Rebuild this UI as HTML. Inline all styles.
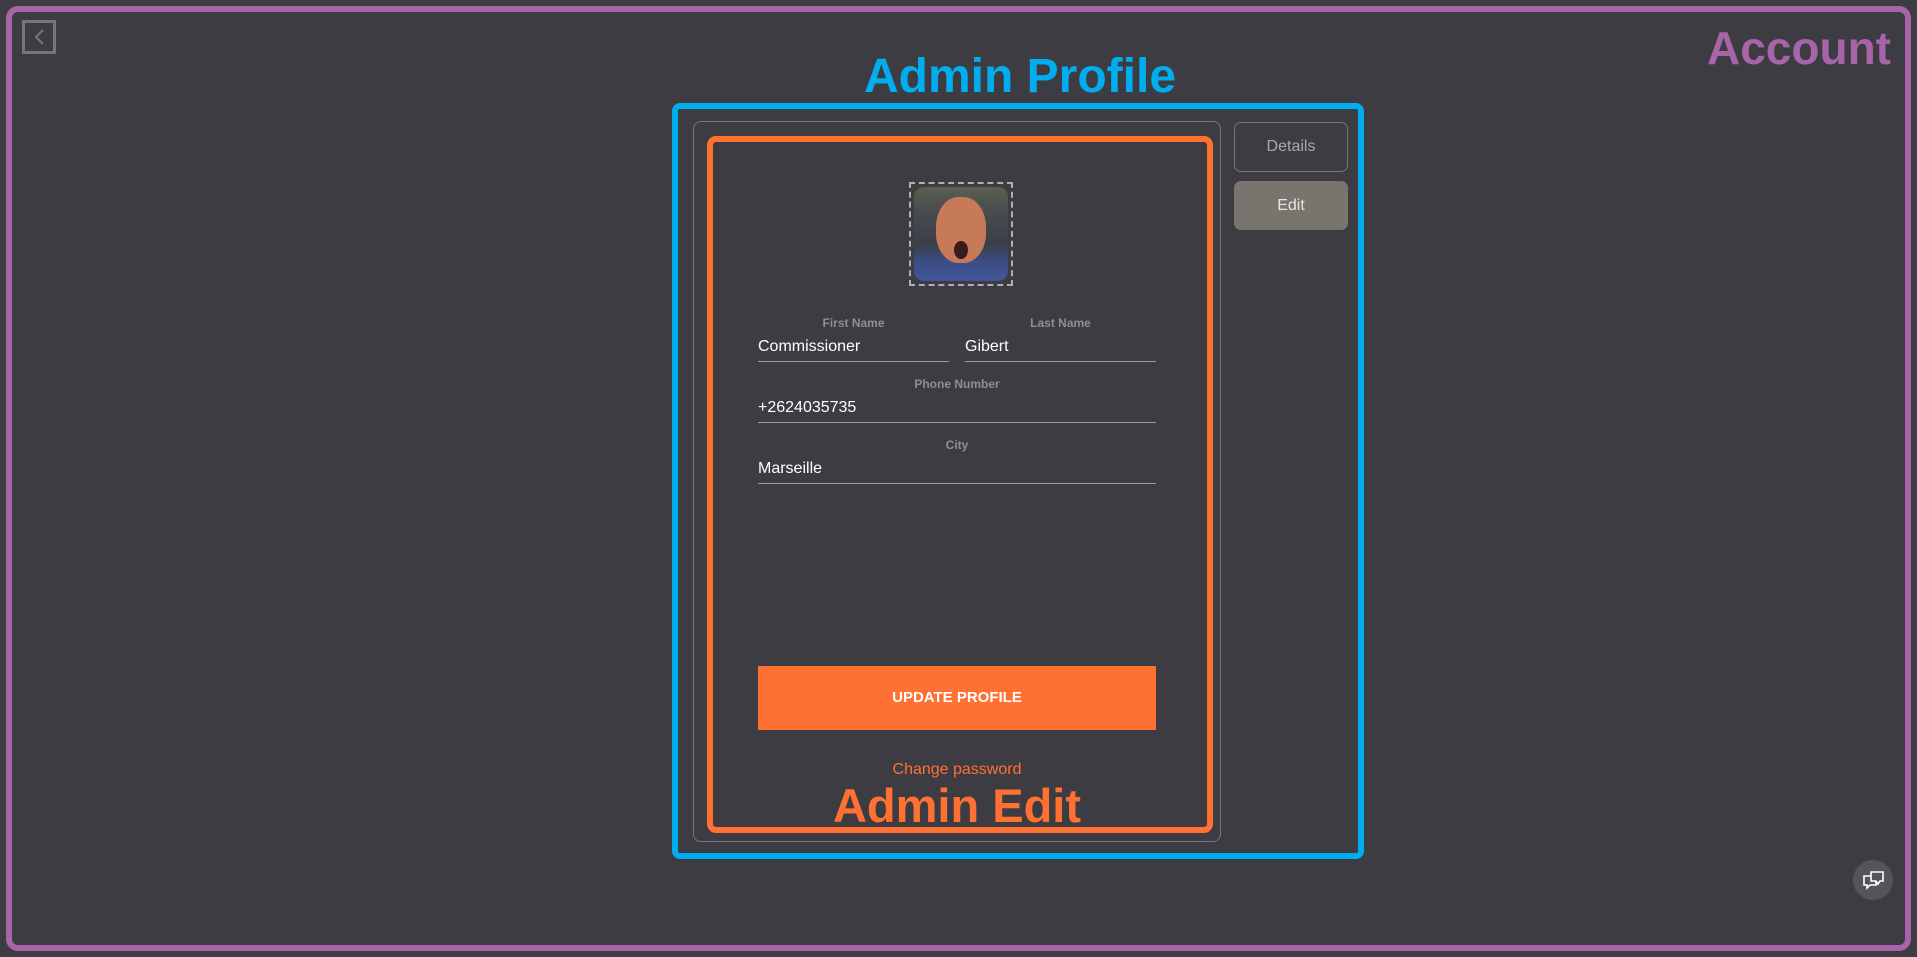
<!DOCTYPE html>
<html><head><meta charset="utf-8"><style>
*{box-sizing:border-box;margin:0;padding:0}
body{width:1917px;height:957px;background:#3d3c42;font-family:"Liberation Sans",sans-serif;position:relative;overflow:hidden}
.a{position:absolute}
.lbl{position:absolute;font-size:12px;font-weight:bold;color:#8f8e94;text-align:center}
.inp{position:absolute;border-bottom:1px solid #9a999f;color:#fff;font-size:16px;padding-bottom:4px;height:24px}
</style></head><body>
<div class="a" style="left:6px;top:6px;width:1905px;height:945px;border:6px solid #a864a8;border-radius:12px"></div>
<div class="a" style="left:22px;top:20px;width:34px;height:34px;border:3px solid #7a7570"></div>
<svg class="a" style="left:22px;top:20px" width="34" height="34"><path d="M21 10 L14 17 L21 24" stroke="#7a7570" stroke-width="2" fill="none"/></svg>
<div class="a" style="right:26px;top:18px;font-size:46px;font-weight:bold;color:#a864a8;line-height:60px">Account</div>
<div class="a" style="left:820px;width:400px;top:47px;text-align:center;font-size:48px;font-weight:bold;color:#00aeef;line-height:60px">Admin Profile</div>
<div class="a" style="left:672px;top:103px;width:692px;height:756px;border:6px solid #00aeef;border-radius:8px"></div>
<div class="a" style="left:693px;top:121px;width:528px;height:721px;border:1px solid #77767a;border-radius:8px"></div>
<div class="a" style="left:707px;top:136px;width:506px;height:697px;border:6px solid #ff7033;border-radius:9px"></div>
<div class="a" style="left:1234px;top:122px;width:114px;height:50px;border:1px solid #77767a;border-radius:7px;color:#a9a8ad;font-size:16px;text-align:center;line-height:48px">Details</div>
<div class="a" style="left:1234px;top:181px;width:114px;height:49px;background:#7a746e;border-radius:7px;color:#e8e6e3;font-size:16px;text-align:center;line-height:49px">Edit</div>
<div class="a" style="left:909px;top:182px;width:104px;height:104px;border:2px dashed #b0afb5;padding:3px">
<div style="width:100%;height:100%;border-radius:10px;background:linear-gradient(180deg,#5a6050 0%,#4a4d4e 25%,#3a3e48 60%,#3b4e86 80%,#41569a 100%);position:relative;overflow:hidden">
<div style="position:absolute;left:22px;top:10px;width:50px;height:66px;border-radius:45%;background:#c77a5a"></div>
<div style="position:absolute;left:40px;top:54px;width:14px;height:18px;border-radius:50%;background:#3a1a1a"></div>
</div></div>
<div class="lbl" style="left:758px;width:191px;top:316px">First Name</div>
<div class="lbl" style="left:965px;width:191px;top:316px">Last Name</div>
<div class="inp" style="left:758px;width:191px;top:338px">Commissioner</div>
<div class="inp" style="left:965px;width:191px;top:338px">Gibert</div>
<div class="lbl" style="left:758px;width:398px;top:377px">Phone Number</div>
<div class="inp" style="left:758px;width:398px;top:399px">+2624035735</div>
<div class="lbl" style="left:758px;width:398px;top:438px">City</div>
<div class="inp" style="left:758px;width:398px;top:460px">Marseille</div>
<div class="a" style="left:758px;top:666px;width:398px;height:64px;background:#ff7033;color:#fff;font-weight:bold;font-size:15px;text-align:center;line-height:64px">UPDATE PROFILE</div>
<div class="a" style="left:758px;width:398px;top:761px;text-align:center;color:#ff7033;font-size:16px">Change password</div>
<div class="a" style="left:758px;width:398px;top:776px;text-align:center;color:#ff7033;font-size:47px;font-weight:bold;line-height:60px">Admin Edit</div>
<div class="a" style="left:1853px;top:860px;width:40px;height:40px;border-radius:50%;background:#55545c"></div>
<svg class="a" style="left:1853px;top:860px" width="40" height="40"><path d="M18 12 H30 V21 H27 L25 24 L23 21 H18 Z M18 16 H11 V25 H14 V28 L17 25 H23 V21" stroke="#fff" stroke-width="1.6" fill="none"/></svg>
</body></html>
